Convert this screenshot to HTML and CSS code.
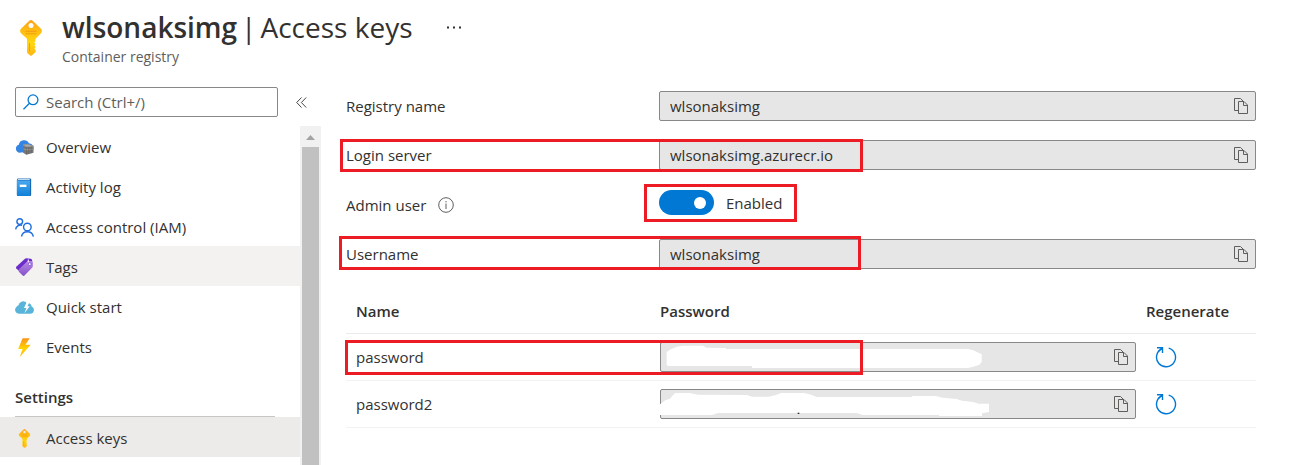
FILE: index.html
```html
<!DOCTYPE html>
<html lang="en">
<head>
<meta charset="utf-8">
<title>wlsonaksimg | Access keys</title>
<link rel="stylesheet" href="styles.css">
</head>
<body>
<svg class="sprite" aria-hidden="true">
  <defs>
    <linearGradient id="gold" x1="0" y1="0" x2="0" y2="1"><stop offset="0" stop-color="#fea11b"/><stop offset=".35" stop-color="#ffc211"/><stop offset=".65" stop-color="#ffd70f"/><stop offset="1" stop-color="#ffb515"/></linearGradient>
    <linearGradient id="bolt-fill" x1="0" y1="0" x2="0" y2="1"><stop offset="0" stop-color="#fa921c"/><stop offset=".55" stop-color="#ffd400"/><stop offset="1" stop-color="#feb413"/></linearGradient>
    <linearGradient id="blue" x1="0" y1="0" x2="0" y2="1"><stop offset="0" stop-color="#4caaf0"/><stop offset="1" stop-color="#0f80d7"/></linearGradient>
    <linearGradient id="violet" x1="0" y1="0" x2="0" y2="1"><stop offset="0" stop-color="#b98de6"/><stop offset="1" stop-color="#8650c8"/></linearGradient>
  </defs>
  <symbol id="key" viewBox="0 0 22 36">
    <path fill="url(#gold)" fill-rule="evenodd" d="M9.3.8Q11-.6 12.700.8L21 8.800Q22.800 11 21 13.200L15.500 18.700V21L14.300 22.200L15.600 24L14.500 25.500L15.800 27L14.500 28.400L15.700 30.500V32L11.700 35.500Q11 36 10.200 35.500L7.500 33.200Q7 32.600 7 32V18.700L1 13.200Q-.8 11 1 8.800ZM11 3.100A2.500 2.500 0 1 0 11 8.100A2.500 2.500 0 1 0 11 3.100Z"/>
    <path d="M5.500 11.300H16.500M5.500 13.800H16.500M9.500 23V31.500" stroke="#f59a12" stroke-width="1.100" fill="none"/>
  </symbol>
  <symbol id="copy" viewBox="0 0 14 16">
    <path d="M4.500 12.500H.5V.5H6.500L9.500 3.500M4.500 15.500V3.500H10L13.500 7V15.500ZM9.500 3.500V7.500H13.500" fill="none" stroke="#605e5c"/>
  </symbol>
  <symbol id="refresh" viewBox="0 0 22 22">
    <path d="M13.700 2.200A9.500 9.500 0 1 1 7 2.700M2 1.800H7.500V7" fill="none" stroke="#0078d4" stroke-width="1.400"/>
    <path d="M3.500 5.500L7.300 2" fill="none" stroke="#0078d4" stroke-width="1.200"/>
  </symbol>
</svg>

<header class="page-header">
  <svg class="page-icon"><use href="#key"/></svg>
  <div>
    <div class="title-row">
      <h1><b>wlsonaksimg</b><span>|</span><span>Access keys</span></h1>
      <button class="more" aria-label="More"><svg width="15" height="3" viewBox="0 0 15 3"><path d="M0 .5h2v2H0zM6 .5h2v2H6zM12 .5h2v2h-2z" fill="#323130"/></svg></button>
    </div>
    <p class="subtitle">Container registry</p>
  </div>
</header>

<div class="layout">
  <aside class="sidebar">
    <div class="search-row">
      <label class="search">
        <svg width="16" height="16" viewBox="0 0 16 16" fill="none" stroke="#0078d4" stroke-width="1.300"><circle cx="10" cy="5.800" r="4.900"/><path d="M6.500 9.300L.5 15.300"/></svg>
        <input type="text" placeholder="Search (Ctrl+/)" aria-label="Search">
      </label>
      <button class="collapse" aria-label="Collapse menu"><svg width="11" height="11" viewBox="0 0 11 11" fill="none" stroke="#484644"><path d="M5.500.5L.7 5.500L5.500 10.500M10.200.5L5.400 5.500L10.200 10.500"/></svg></button>
    </div>
    <div class="menu-area">
      <nav class="menu">
        <a href="#overview"><svg viewBox="0 0 20 20"><path d="M4.500 15.500A4.400 4.400 0 0 1 4 7A5.700 5.700 0 0 1 14.700 5.500A5 5 0 0 1 18 14Z" fill="#3485e3"/><path d="M8.500 7.200L13 6.500L19.500 8.500V15.500L12 17.500L8.500 15.500Z" fill="#777"/><path d="M8.500 7.200L13 6.500L19.500 8.500L12.300 9.400ZM9 11.500L12.300 12.700L19.500 11.500" fill="#aaa" stroke="#999" stroke-width=".6"/><path d="M12.300 9.400V17.300M14.500 9.500V16.500M17 9.200V16" stroke="#606060" stroke-width=".7"/></svg>Overview</a>
        <a href="#activity"><svg viewBox="0 0 20 20"><path d="M3.500.5H16Q17 .5 17 1.500V18Q17 19 16 19H3.500Q2 19 2 17.500V2Q2 .5 3.500.5Z" fill="#1769b5"/><path d="M3.500 2.500H15.800V19H3Q2 19 2 18V2Z" fill="url(#blue)"/><path d="M3 1.500H15.500" stroke="#d8ebfa"/><path d="M5 7H12V9.500H5Z" fill="#fff"/></svg>Activity log</a>
        <a href="#iam"><svg viewBox="0 0 20 20" fill="none" stroke="#1f6fe0" stroke-width="1.500"><circle cx="5" cy="3.800" r="3"/><path d="M.7 12A5 5 0 0 1 7.500 7.800"/><circle cx="13" cy="9.500" r="4"/><path d="M6.800 19.500A6.400 6.400 0 0 1 19.300 19.500"/></svg>Access control (IAM)</a>
        <a href="#tags" class="hovered"><svg viewBox="0 0 20 20"><path d="M1 9.500L10.500.8Q11.200.3 12 .3L16.500.7Q18 1 18 2.500V6L8 17L1.400 11Z" fill="#6b2cc9"/><path d="M4 12L13.500 2.800L18 3.500Q18.800 3.600 18.900 5L18.700 9Q18.600 9.700 18 10.300L10 18.500Q9 19.200 8 18.500L4 14.500Z" fill="url(#violet)"/><circle cx="15.500" cy="6.500" r="1.500" fill="#fff" stroke="#6b2cc9" stroke-width=".7"/><path d="M14 1.500V4.500" stroke="#fff"/></svg>Tags</a>
        <a href="#quick"><svg viewBox="0 0 20 20"><path d="M4 16.500A4 4 0 0 1 1.500 9.500Q2 8 3.500 7.800A5.200 5.200 0 0 1 12.500 5.300A4 4 0 0 1 17.500 9A3.900 3.900 0 0 1 16 16.500Z" fill="#59b4d9"/><path d="M12.500 4L9.500 10.500H12L10 16L15.500 8.800H13L15.500 4Z" fill="#fff"/></svg>Quick start</a>
        <a href="#events"><svg viewBox="0 0 20 20"><path d="M8 .3H15.500L11 7H16.500L5 20L8 11.500H3.300Z" fill="url(#bolt-fill)"/></svg>Events</a>
        <h2>Settings</h2>
        <a href="#keys" class="current" aria-current="page"><svg><use href="#key"/></svg>Access keys</a>
      </nav>
      <div class="scrollbar" aria-hidden="true"><svg width="9" height="5" viewBox="0 0 9 5"><path d="M0 5L4.500 0L9 5Z" fill="#a3a3a3"/></svg><div class="thumb"></div></div>
    </div>
  </aside>

  <main class="content">
    <div class="form">
      <div class="row">
        <label for="registry">Registry name</label>
        <div class="field"><input id="registry" readonly value="wlsonaksimg"><button aria-label="Copy registry name"><svg><use href="#copy"/></svg></button></div>
      </div>
      <div class="row">
        <label for="server">Login server</label>
        <div class="field"><input id="server" readonly value="wlsonaksimg.azurecr.io"><button aria-label="Copy login server"><svg><use href="#copy"/></svg></button></div>
        <span class="mark mark-server"></span>
      </div>
      <div class="row">
        <label for="admin">Admin user <svg class="info" viewBox="0 0 16 16" fill="none" stroke="#605e5c"><circle cx="8" cy="8" r="7.300"/><path d="M8 6.500V12M8 4V5.300"/></svg></label>
        <div class="switch"><input id="admin" type="checkbox" role="switch" checked><span>Enabled</span></div>
        <span class="mark mark-admin"></span>
      </div>
      <div class="row">
        <label for="user">Username</label>
        <div class="field"><input id="user" readonly value="wlsonaksimg"><button aria-label="Copy username"><svg><use href="#copy"/></svg></button></div>
        <span class="mark mark-user"></span>
      </div>
    </div>

    <table class="passwords">
      <thead><tr><th class="col-name">Name</th><th>Password</th><th class="col-action">Regenerate</th></tr></thead>
      <tbody>
        <tr>
          <td class="name"><label for="pw1">password</label><span class="mark mark-password"></span></td>
          <td><div class="field"><input id="pw1" readonly value=""><button aria-label="Copy password"><svg><use href="#copy"/></svg></button>
            <svg class="redaction" viewBox="60 156 1428 90"><path fill="#fff" d="M80 186L86 182L92 178L102 174L110 170L128 167H188L200 173L258 174V177H984L1000 181L1012 187L1025 193V216L1018 224L1000 230L984 234H336V228H84L80 224Z"/></svg></div></td>
          <td><button class="regen" aria-label="Regenerate password"><svg><use href="#refresh"/></svg></button></td>
        </tr>
        <tr>
          <td class="name"><label for="pw2">password2</label></td>
          <td><div class="field"><input id="pw2" readonly value=""><button aria-label="Copy password2"><svg><use href="#copy"/></svg></button>
            <svg class="redaction" viewBox="60 297 1428 90"><path fill="#fff" d="M56 346L66 338L76 331L90 326L99 315L106 309H148L174 314L320 315L336 320H386L408 315L424 309H492L514 314L530 321H816V318H888L908 323L950 327L966 332L1000 336L1016 341H1047V366L1026 370V378H897V375H668L650 369H234L216 375H56Z"/><path d="M473 368h5v4h-5z" fill="#323130"/></svg></div></td>
          <td><button class="regen" aria-label="Regenerate password2"><svg><use href="#refresh"/></svg></button></td>
        </tr>
      </tbody>
    </table>
  </main>
</div>
</body>
</html>
```
FILE: styles.css
```css
* { box-sizing: border-box; }

body {
  margin: 0;
  min-height: 100vh;
  display: flex;
  flex-direction: column;
  background: #fff;
  color: #323130;
  font: 15px/20px "Open Sans", "Noto Sans", sans-serif;
}

h1, h2, p { margin: 0; }

button {
  border: 0;
  padding: 0;
  background: none;
  font: inherit;
  display: flex;
}

.sprite {
  position: absolute;
  width: 0;
  height: 0;
}

.page-header {
  display: flex;
  gap: 20px;
  padding: 7px 20px 0;
  height: 87px;
}
.page-icon {
  width: 22px;
  height: 36px;
  margin-top: 13px;
}
.title-row {
  display: flex;
  align-items: center;
  gap: 34px;
}
h1 {
  display: flex;
  gap: 4px;
  font-size: 28px;
  line-height: 40px;
  font-weight: 400;
}
h1 b { font-weight: 600; }
.subtitle {
  font-size: 14px;
  color: #605e5c;
}

.layout {
  flex: 1;
  display: flex;
}

.sidebar {
  width: 321px;
  flex: none;
  display: flex;
  flex-direction: column;
}
.search-row {
  display: flex;
  align-items: center;
  gap: 18px;
  padding: 0 14px 9px 15px;
}
.search {
  flex: 1;
  display: flex;
  align-items: center;
  gap: 7px;
  height: 30px;
  padding: 0 7px;
  border: 1px solid #8a8886;
  border-radius: 2px;
}
.search svg { flex: none; }
.search input {
  flex: 1;
  min-width: 0;
  border: 0;
  padding: 0;
  outline: 0;
  background: none;
  font: inherit;
  color: inherit;
}
.search input::placeholder { color: #605e5c; opacity: 1; }

.menu-area {
  flex: 1;
  display: flex;
}
.menu { flex: 1; }
.menu a {
  display: flex;
  align-items: center;
  gap: 12px;
  height: 40px;
  padding: 2px 15px 0;
  color: inherit;
  text-decoration: none;
}
.menu a svg {
  width: 19px;
  height: 19px;
}
.menu .hovered { background: #f3f2f1; }
.menu .current { background: #edebe9; }
.menu h2 {
  margin: 0 25px 0 15px;
  padding: 21px 0 9px;
  border-bottom: 1px solid #c8c6c4;
  font-size: 15px;
  line-height: 20px;
  font-weight: 600;
}

.scrollbar {
  width: 21px;
  padding: 0 2px;
  background: #f1f1f1;
  display: flex;
  flex-direction: column;
  align-items: center;
}
.scrollbar svg { margin: 9px 0 7px; }
.thumb {
  flex: 1;
  width: 100%;
  background: #c1c1c1;
}

.content {
  flex: 1;
  padding: 4px 55px 0 25px;
}
.form {
  display: grid;
  gap: 19px;
}
.row {
  position: relative;
  display: flex;
  align-items: center;
}
.row > label {
  width: 313px;
  display: flex;
  align-items: center;
  gap: 12px;
}
.info {
  width: 16px;
  height: 16px;
}

.field {
  position: relative;
  flex: 1;
  display: flex;
  align-items: center;
  height: 30px;
  padding: 0 7px 0 10px;
  border: 1px solid #8a8886;
  border-radius: 2px;
  background: #e6e6e6;
}
.field input {
  flex: 1;
  min-width: 0;
  padding: 0;
  border: 0;
  outline: 0;
  background: none;
  font: inherit;
  color: inherit;
}
.field button svg {
  width: 14px;
  height: 16px;
}

.switch {
  display: flex;
  align-items: center;
  gap: 12px;
  height: 31px;
  padding-bottom: 4px;
}
.switch input {
  appearance: none;
  width: 55px;
  height: 25px;
  margin: 0;
  padding: 0 8px;
  border-radius: 13px;
  background: #0078d4;
  display: flex;
  align-items: center;
  justify-content: flex-end;
}
.switch input::before {
  content: "";
  width: 12px;
  height: 12px;
  border-radius: 50%;
  background: #fff;
}

/* Highlight frames lying over the rows */
.mark {
  position: absolute;
  z-index: 1;
  border: 3px solid #ed1c24;
  pointer-events: none;
}
.mark-server { left: -6px; top: -1px; width: 523px; height: 33px; }
.mark-admin { left: 298px; top: -5px; width: 153px; height: 38px; }
.mark-user { left: -7px; top: -3px; width: 522px; height: 34px; }
.mark-password { left: -1px; top: 6px; width: 518px; height: 35px; }

.passwords {
  width: 100%;
  margin-top: 20px;
  border-collapse: separate;
  border-spacing: 0;
  table-layout: fixed;
}
.passwords th {
  padding: 12px 0;
  text-align: left;
  font-weight: 600;
  border-bottom: 1px solid #edebe9;
}
.passwords td {
  position: relative;
  padding: 8px 10px 8px 0;
  border-bottom: 1px solid #f3f2f1;
}
.passwords .col-name, .passwords .name { padding-left: 10px; }
.passwords .name { z-index: 1; }
.col-name { width: 314px; }
.col-action { width: 110px; }
.redaction {
  position: absolute;
  left: -1px;
  top: -1px;
  width: 476px;
  height: 30px;
}
.regen { margin-left: 9px; }
.regen svg {
  width: 22px;
  height: 22px;
}
```
